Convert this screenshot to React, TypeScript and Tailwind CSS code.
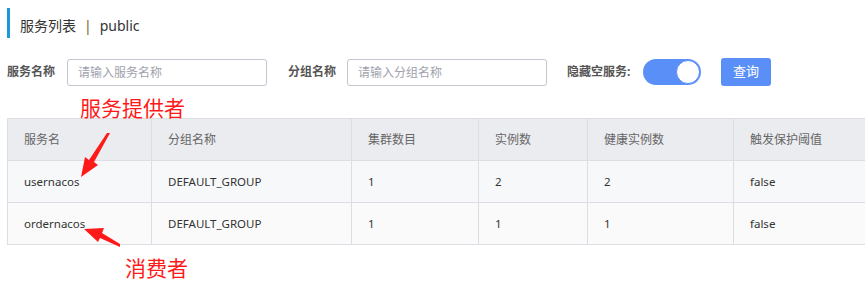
import React from 'react'

const columns = [
  { title: '服务名', width: 'w-[144px]' },
  { title: '分组名称', width: 'w-[200px]' },
  { title: '集群数目', width: 'w-[127px]' },
  { title: '实例数', width: 'w-[109px]' },
  { title: '健康实例数', width: 'w-[146px]' },
  { title: '触发保护阈值', width: 'w-[160px]' },
]

const rows = [
  ['usernacos', 'DEFAULT_GROUP', '1', '2', '2', 'false'],
  ['ordernacos', 'DEFAULT_GROUP', '1', '1', '1', 'false'],
]

function FilterInput({ placeholder }: { placeholder: string }) {
  return (
    <input
      readOnly
      placeholder={placeholder}
      className="h-[27px] w-[200px] rounded-[3px] border border-[#c4c6cf] bg-white px-[10px] text-[12px] text-[#333] outline-none placeholder:text-[#a0a2ad]"
    />
  )
}

export default function App() {
  return (
    <div
      className="relative h-[288px] w-[865px] overflow-hidden bg-white"
      style={{ fontFamily: '"Noto Sans", "Noto Sans CJK SC", sans-serif' }}
    >
      {/* Page title */}
      <div className="flex items-center pl-[7px] pt-[8px]">
        <div className="h-[30px] w-[3px] bg-[#1a9bd6]" />
        <span className="ml-[10px] mt-[5px] text-[14px] text-[#333]">
          服务列表<span className="mx-[8px] text-[#7a5a2a]">|</span>public
        </span>
      </div>

      {/* Filters */}
      <div className="mt-[20px] flex items-center pl-[7px]">
        <span className="w-[60px] text-[12px] font-bold text-[#555]">服务名称</span>
        <FilterInput placeholder="请输入服务名称" />
        <span className="ml-[21px] w-[59px] text-[12px] font-bold text-[#555]">分组名称</span>
        <FilterInput placeholder="请输入分组名称" />
        <span className="ml-[20px] w-[76px] text-[12px] font-bold text-[#555]">隐藏空服务:</span>
        <div className="flex h-[26px] w-[58px] items-center justify-end rounded-full bg-[#5a8ff8] p-[1px]">
          <div className="h-[24px] w-[24px] rounded-full border border-[#5a8ff8] bg-white" />
        </div>
        <button className="ml-[20px] h-[28px] w-[50px] rounded-[3px] bg-[#5a8ff8] text-[13px] text-white">
          查询
        </button>
      </div>

      {/* Table */}
      <div className="mt-[32px] ml-[7px] w-[900px] border-t border-l border-[#dcdee3]">
        <div className="flex h-[42px] bg-[#ebecf0]">
          {columns.map((c) => (
            <div
              key={c.title}
              className={`${c.width} flex items-center border-r border-b border-[#dcdee3] pl-[16px] text-[12px] text-[#666]`}
            >
              {c.title}
            </div>
          ))}
        </div>
        {rows.map((r, i) => (
          <div key={i} className={`flex h-[42px] ${i === 0 ? 'bg-[#f7f8fa]' : 'bg-[#fafafa]'}`}>
            {r.map((cell, j) => (
              <div
                key={j}
                className={`${columns[j].width} flex items-center border-r border-b border-[#dcdee3] pl-[16px] text-[11.5px] text-[#333]`}
              >
                {cell}
              </div>
            ))}
          </div>
        ))}
      </div>

      {/* Annotations */}
      <span className="absolute left-[80px] top-[95px] text-[21px] leading-[26px] text-[#ff1a1a]">
        服务提供者
      </span>
      <span className="absolute left-[125px] top-[255px] text-[21px] leading-[26px] text-[#ff1a1a]">
        消费者
      </span>
      <svg className="absolute left-0 top-0" width="865" height="288" viewBox="0 0 865 288">
        <path d="M110 133 L94 162 L98 165 L81 177 L85 157 L89 160 L107 133 Z" fill="#ff1a1a" />
        <path d="M120 247 L100 238 L98 242 L84 229 L104 228 L102 233 L120 244 Z" fill="#ff1a1a" />
      </svg>
    </div>
  )
}
